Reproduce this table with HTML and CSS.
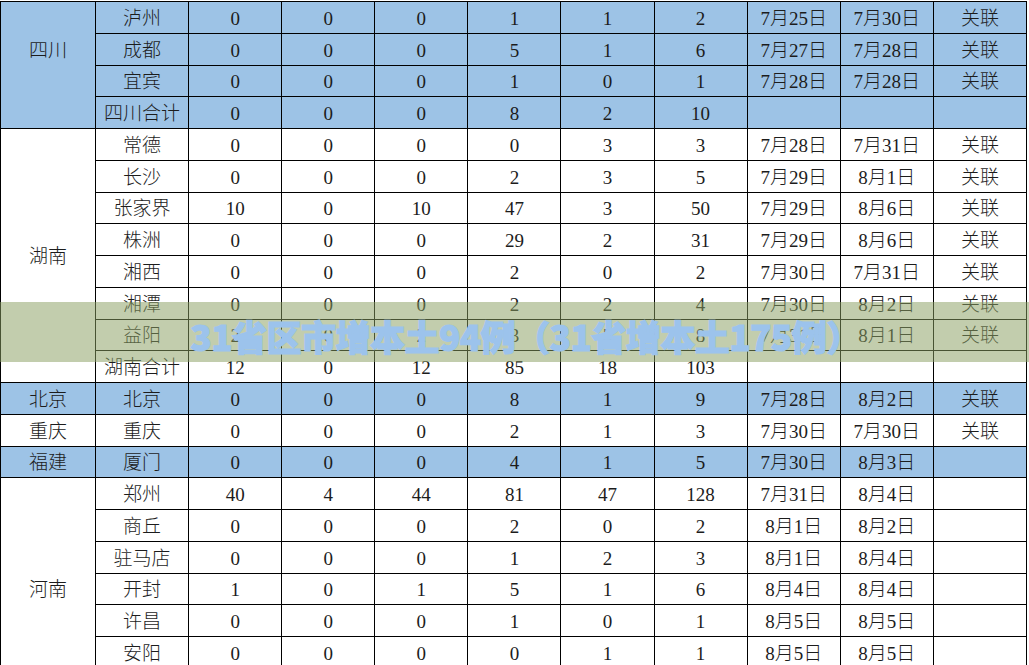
FILE: index.html
```html
<!DOCTYPE html>
<html lang="zh">
<head>
<meta charset="utf-8">
<title>31省区市增本土94例</title>
<link rel="stylesheet" href="styles.css">
</head>
<body>
<div class="page">
<table class="grid">
<colgroup><col class="c-prov"><col><col><col><col><col><col><col><col><col><col></colgroup>
<tbody>
<tr class="blue"><td rowspan="4" class="prov up">四川</td><td>泸州</td><td>0</td><td>0</td><td>0</td><td>1</td><td>1</td><td>2</td><td>7月25日</td><td>7月30日</td><td>关联</td></tr>
<tr class="blue"><td>成都</td><td>0</td><td>0</td><td>0</td><td>5</td><td>1</td><td>6</td><td>7月27日</td><td>7月28日</td><td>关联</td></tr>
<tr class="blue"><td>宜宾</td><td>0</td><td>0</td><td>0</td><td>1</td><td>0</td><td>1</td><td>7月28日</td><td>7月28日</td><td>关联</td></tr>
<tr class="blue"><td>四川合计</td><td>0</td><td>0</td><td>0</td><td>8</td><td>2</td><td>10</td><td></td><td></td><td></td></tr>

<tr><td rowspan="8" class="prov">湖南</td><td>常德</td><td>0</td><td>0</td><td>0</td><td>0</td><td>3</td><td>3</td><td>7月28日</td><td>7月31日</td><td>关联</td></tr>
<tr><td>长沙</td><td>0</td><td>0</td><td>0</td><td>2</td><td>3</td><td>5</td><td>7月29日</td><td>8月1日</td><td>关联</td></tr>
<tr><td>张家界</td><td>10</td><td>0</td><td>10</td><td>47</td><td>3</td><td>50</td><td>7月29日</td><td>8月6日</td><td>关联</td></tr>
<tr><td>株洲</td><td>0</td><td>0</td><td>0</td><td>29</td><td>2</td><td>31</td><td>7月29日</td><td>8月6日</td><td>关联</td></tr>
<tr><td>湘西</td><td>0</td><td>0</td><td>0</td><td>2</td><td>0</td><td>2</td><td>7月30日</td><td>7月31日</td><td>关联</td></tr>
<tr><td>湘潭</td><td>0</td><td>0</td><td>0</td><td>2</td><td>2</td><td>4</td><td>7月30日</td><td>8月2日</td><td>关联</td></tr>
<tr><td>益阳</td><td>2</td><td>0</td><td>2</td><td>3</td><td>5</td><td>8</td><td>7月31日</td><td>8月1日</td><td>关联</td></tr>
<tr><td>湖南合计</td><td>12</td><td>0</td><td>12</td><td>85</td><td>18</td><td>103</td><td></td><td></td><td></td></tr>

<tr class="blue"><td class="prov">北京</td><td>北京</td><td>0</td><td>0</td><td>0</td><td>8</td><td>1</td><td>9</td><td>7月28日</td><td>8月2日</td><td>关联</td></tr>
<tr><td class="prov">重庆</td><td>重庆</td><td>0</td><td>0</td><td>0</td><td>2</td><td>1</td><td>3</td><td>7月30日</td><td>7月30日</td><td>关联</td></tr>
<tr class="blue"><td class="prov">福建</td><td>厦门</td><td>0</td><td>0</td><td>0</td><td>4</td><td>1</td><td>5</td><td>7月30日</td><td>8月3日</td><td></td></tr>

<tr><td rowspan="6" class="prov down">河南</td><td>郑州</td><td>40</td><td>4</td><td>44</td><td>81</td><td>47</td><td>128</td><td>7月31日</td><td>8月4日</td><td></td></tr>
<tr><td>商丘</td><td>0</td><td>0</td><td>0</td><td>2</td><td>0</td><td>2</td><td>8月1日</td><td>8月2日</td><td></td></tr>
<tr><td>驻马店</td><td>0</td><td>0</td><td>0</td><td>1</td><td>2</td><td>3</td><td>8月1日</td><td>8月4日</td><td></td></tr>
<tr><td>开封</td><td>1</td><td>0</td><td>1</td><td>5</td><td>1</td><td>6</td><td>8月4日</td><td>8月4日</td><td></td></tr>
<tr><td>许昌</td><td>0</td><td>0</td><td>0</td><td>1</td><td>0</td><td>1</td><td>8月5日</td><td>8月5日</td><td></td></tr>
<tr><td>安阳</td><td>0</td><td>0</td><td>0</td><td>0</td><td>1</td><td>1</td><td>8月5日</td><td>8月5日</td><td></td></tr>
</tbody>
</table>
<div class="banner"><span class="banner-text">31省区市增本土94例（31省增本土175例）</span></div>
</div>
</body>
</html>
```

FILE: styles.css
```css
html, body {
  margin: 0;
  padding: 0;
  background: #ffffff;
}
body {
  width: 1029px;
  height: 665px;
  overflow: hidden;
}
.page {
  position: relative;
  width: 1029px;
  height: 665px;
  overflow: hidden;
  padding-top: 1px;
  box-sizing: border-box;
}
.grid {
  border-collapse: collapse;
  table-layout: fixed;
  width: 1027px;
  font-family: "Liberation Serif", "Noto Sans CJK SC", serif;
  font-size: 19px;
  font-weight: 300;
  color: #1c1c1c;
}
.grid col.c-prov {
  width: 95px;
}
.grid td {
  border: 1px solid #000;
  height: 31.75px;
  padding: 3px 0 0 0;
  box-sizing: border-box;
  text-align: center;
  vertical-align: middle;
  line-height: 24px;
  white-space: nowrap;
}
.grid tr.blue td {
  background: #9dc3e6;
}
.grid td.prov.up {
  padding-bottom: 31px;
}
.grid td.prov.down {
  padding-top: 33px;
}
.banner {
  position: absolute;
  left: 0;
  top: 302px;
  width: 1029px;
  height: 60px;
  background: rgba(138, 160, 98, 0.52);
  display: flex;
  align-items: center;
  justify-content: center;
}
.banner-text {
  font-family: "Noto Sans CJK SC", "Noto Sans", sans-serif;
  font-weight: 900;
  font-size: 35px;
  color: #9cc3ec;
  -webkit-text-stroke: 1.2px #9cc3ec;
  padding-left: 22px;
  letter-spacing: -0.5px;
  line-height: 1;
  margin-top: 6px;
}
```
